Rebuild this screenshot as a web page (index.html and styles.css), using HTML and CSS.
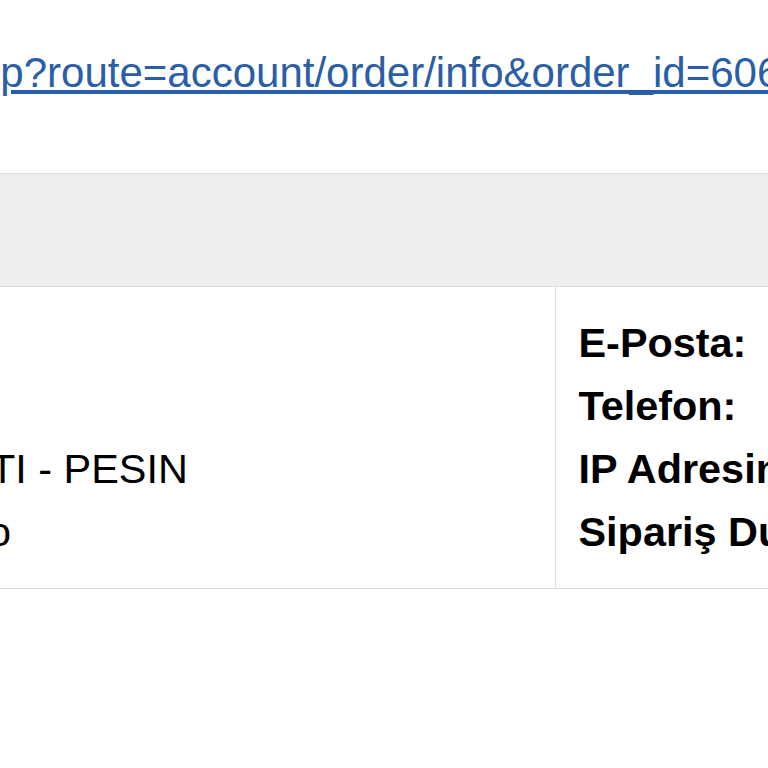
FILE: index.html
```html
<!DOCTYPE html>
<html lang="tr">
<head>
<meta charset="utf-8">
<title>Sipariş Bilgisi</title>
<link rel="stylesheet" href="styles.css">
</head>
<body>
<div class="page">
  <p class="link-row"><a class="order-link" href="#">hp?route=account/order/info&amp;order_id=606</a></p>
  <table class="order">
    <colgroup>
      <col class="col-left">
      <col class="col-right">
    </colgroup>
    <thead>
      <tr><td class="head" colspan="2">&nbsp;</td></tr>
    </thead>
    <tbody>
      <tr>
        <td class="left">
          <div class="line">&nbsp;</div>
          <div class="line">&nbsp;</div>
          <div class="line cut-t">TI - PESIN</div>
          <div class="line cut-o">o</div>
        </td>
        <td class="right">
          <div class="line"><b>E-Posta:</b></div>
          <div class="line"><b>Telefon:</b></div>
          <div class="line"><b>IP Adresiniz:</b></div>
          <div class="line"><b>Sipariş Durumu:</b></div>
        </td>
      </tr>
    </tbody>
  </table>
</div>
</body>
</html>
```
FILE: styles.css
```css
html, body {
  margin: 0;
  padding: 0;
  overflow: hidden;
  background: #ffffff;
}
.page {
  width: 768px;
  height: 768px;
  overflow: hidden;
  font-family: "Liberation Sans", Arial, sans-serif;
  font-size: 42px;
  line-height: 63px;
  color: #000000;
}
.link-row {
  margin: 41px 0 69px 0;
  white-space: nowrap;
  text-indent: -23px;
}
.order-link {
  color: #2a5ea6;
  text-decoration: underline;
}
.order {
  border-collapse: collapse;
  width: 1400px;
  table-layout: fixed;
  font-size: 41.4px;
}
.col-left {
  width: 555px;
}
.col-right {
  width: 845px;
}
.order td {
  vertical-align: top;
  padding: 0;
}
.head {
  background: #eeeeee;
  border-top: 1px solid #dddddd;
  border-bottom: 1px solid #dddddd;
  height: 112px;
  line-height: 112px;
  box-sizing: border-box;
}
.left {
  border-bottom: 1px solid #dddddd;
  padding: 25px 0 24px 0 !important;
  white-space: nowrap;
  overflow: hidden;
}
.right {
  border-left: 1px solid #dddddd;
  border-bottom: 1px solid #dddddd;
  padding: 25px 0 24px 23px !important;
  white-space: nowrap;
}
.line {
  height: 63px;
}
.cut-t {
  text-indent: -10px;
}
.cut-o {
  text-indent: -12px;
}
```
